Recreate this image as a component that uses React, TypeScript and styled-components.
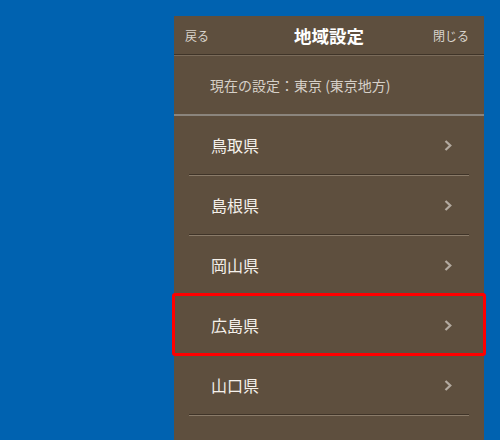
import React from "react";
import styled, { createGlobalStyle } from "styled-components";

const GlobalStyle = createGlobalStyle`
  html, body {
    margin: 0;
    padding: 0;
    background: #0062b0;
    overflow: hidden;
  }
  body {
    font-family: "Noto Sans CJK JP", "Noto Sans", sans-serif;
  }
`;

const Page = styled.div`
  display: flex;
  justify-content: flex-end;
  padding: 16px 16px 0;
  height: 100vh;
  box-sizing: border-box;
`;

const Panel = styled.div`
  width: 310px;
  background: #5e4f3e;
  display: flex;
  flex-direction: column;
`;

const Header = styled.div`
  height: 38px;
  display: flex;
  align-items: center;
  justify-content: space-between;
  padding: 0 15px 0 11px;
  border-bottom: 1px solid #3f3428;
  position: relative;
`;

const HeaderLink = styled.span`
  font-size: 12px;
  color: #d9d4cc;
`;

const Title = styled.h1`
  position: absolute;
  left: 0;
  right: 0;
  margin: 0;
  text-align: center;
  font-size: 17.5px;
  font-weight: 700;
  color: #ffffff;
  pointer-events: none;
`;

const Current = styled.div`
  height: 58px;
  display: flex;
  align-items: center;
  padding-left: 36px;
  border-top: 1px solid #7a6b5a;
  border-bottom: 2px solid #8b857d;
  font-size: 14px;
  color: #d6d0c8;
`;

const List = styled.ul`
  list-style: none;
  margin: 0;
  padding: 0;
`;

const Row = styled.li<{ $highlighted?: boolean }>`
  position: relative;
  height: 58px;
  margin: 0 15px 1px;
  padding: 0 17px 0 22px;
  display: flex;
  align-items: center;
  justify-content: space-between;
  border-bottom: 1px solid #3f3428;
  box-shadow: 0 1px 0 #8a7b69;
  font-size: 16px;
  color: #f5f1eb;

  &::after {
    content: "";
    display: ${(p) => (p.$highlighted ? "block" : "none")};
    position: absolute;
    top: -3px;
    bottom: -2px;
    left: -17px;
    right: -17px;
    border: 3px solid #ff0000;
    border-radius: 3px;
    pointer-events: none;
  }
`;

const Chevron = () => (
  <svg width="8" height="11" viewBox="0 0 8 11">
    <polyline
      points="1.5,1 6.3,5.5 1.5,10"
      fill="none"
      stroke="#b3aaa0"
      strokeWidth="2.2"
    />
  </svg>
);

const prefectures = ["鳥取県", "島根県", "岡山県", "広島県", "山口県"];

export default function App() {
  return (
    <>
      <GlobalStyle />
      <Page>
        <Panel>
          <Header>
            <HeaderLink>戻る</HeaderLink>
            <Title>地域設定</Title>
            <HeaderLink>閉じる</HeaderLink>
          </Header>
          <Current>現在の設定：東京 (東京地方)</Current>
          <List>
            {prefectures.map((name) => (
              <Row key={name} $highlighted={name === "広島県"}>
                <span>{name}</span>
                <Chevron />
              </Row>
            ))}
          </List>
        </Panel>
      </Page>
    </>
  );
}
